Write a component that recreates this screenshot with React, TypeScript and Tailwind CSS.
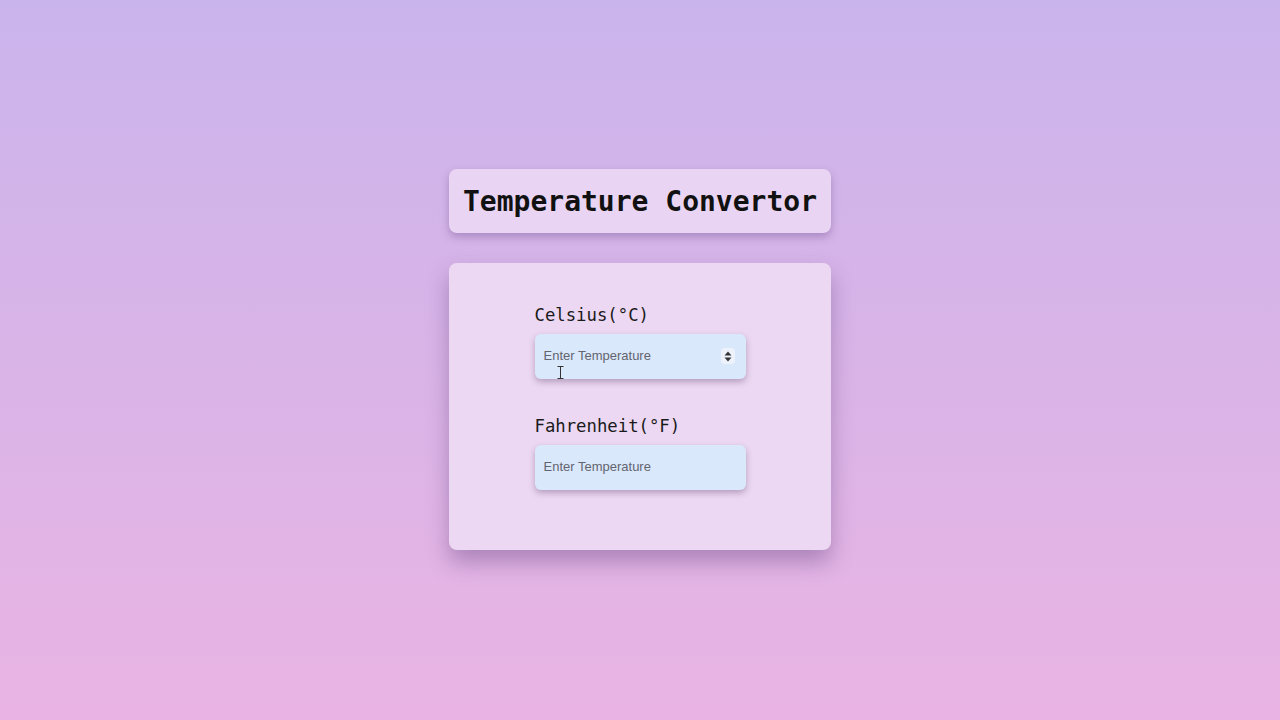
import React from "react";

function Field({ label, spinner }: { label: string; spinner?: boolean }) {
  return (
    <div className="flex flex-col w-[211px]">
      <label className="text-[17.3px] leading-[24px] text-[#1a1a1a] font-['DejaVu_Sans_Mono',monospace] mb-[7px]">
        {label}
      </label>
      <div className="relative">
        <input
          type="text"
          placeholder="Enter Temperature"
          className="w-full h-[45px] rounded-md bg-[#d9e8fb] px-[9px] pb-[2px] text-[13px] font-['Liberation_Sans',Arial,sans-serif] text-[#333] placeholder:text-[#64646e] shadow-[0_3px_6px_rgba(80,50,100,0.35)] outline-none"
        />
        {spinner && (
          <div className="absolute right-[11px] top-[14px] w-[14px] h-[16px] rounded-sm bg-[#eef3fb] flex items-center justify-center">
            <svg width="8" height="11" viewBox="0 0 8 11">
              <path d="M4 0.5 L7.5 4.5 H0.5 Z" fill="#333" />
              <path d="M4 10.5 L7.5 6.5 H0.5 Z" fill="#333" />
            </svg>
          </div>
        )}
        {spinner && (
          <svg
            className="absolute left-[22px] top-[32px]"
            width="7"
            height="13"
            viewBox="0 0 7 13"
          >
            <path
              d="M0.5 0.5 H6.5 M3.5 0.5 V12.5 M0.5 12.5 H6.5"
              stroke="#333"
              strokeWidth="1"
              fill="none"
            />
          </svg>
        )}
      </div>
    </div>
  );
}

export default function App() {
  return (
    <div className="min-h-screen w-full bg-gradient-to-b from-[#cab4ec] to-[#e9b4e3] flex flex-col items-center pt-[169px]">
      <div className="w-[382px] h-[64px] rounded-lg bg-[#e9d5f3] flex items-center justify-center pt-[2px] shadow-[0_4px_8px_rgba(90,60,120,0.35)]">
        <h1 className="text-[28px] font-bold text-[#111] font-['DejaVu_Sans_Mono',monospace]">
          Temperature Convertor
        </h1>
      </div>
      <div className="mt-[30px] w-[382px] h-[287px] rounded-lg bg-[#ecd8f2] flex flex-col items-center pt-[40px] gap-[35px] shadow-[0_12px_22px_rgba(90,60,120,0.4)]">
        <Field label="Celsius(°C)" spinner />
        <Field label="Fahrenheit(°F)" />
      </div>
    </div>
  );
}
